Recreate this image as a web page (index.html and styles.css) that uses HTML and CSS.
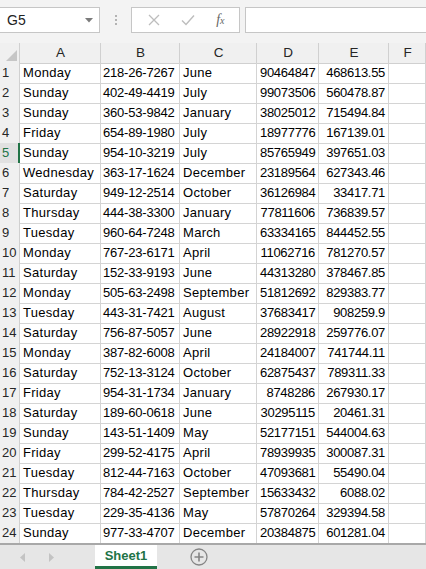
FILE: index.html
```html
<!DOCTYPE html>
<html lang="en">
<head>
  <meta charset="UTF-8">
  <title>Book1 - Excel</title>
  <link rel="stylesheet" href="styles.css">
</head>
<body>
<div id="formula-bar">
  <div class="name-box">
    <span>G5</span>
    <svg class="drop" width="8" height="5" viewBox="0 0 8 5"><polygon points="0,0 8,0 4,4.5" fill="#7b7b7b"/></svg>
  </div>
  <div class="grip"><i></i><i></i><i></i></div>
  <div class="fn-box">
    <svg width="12" height="12" viewBox="0 0 12 12"><path d="M1 1 L11 11 M11 1 L1 11" stroke="#bdbdbd" stroke-width="1.3" fill="none"/></svg>
    <svg width="14" height="12" viewBox="0 0 14 12"><path d="M1 6.5 L5 10.5 L13 1.5" stroke="#bdbdbd" stroke-width="1.4" fill="none"/></svg>
    <span class="fx">f<sub>x</sub></span>
  </div>
  <div class="formula-input"></div>
</div>

<div id="sheet">
  <div class="row head">
    <div class="corner"><svg width="11" height="11" viewBox="0 0 11 11"><polygon points="11,0 11,11 0,11" fill="#c6c6c6"/></svg></div>
    <div class="cell">A</div>
    <div class="cell">B</div>
    <div class="cell">C</div>
    <div class="cell">D</div>
    <div class="cell">E</div>
    <div class="cell">F</div>
  </div>
  <div id="rows"></div>
</div>

<div id="tab-bar">
  <div class="nav">
    <svg width="6" height="9" viewBox="0 0 6 9"><polygon points="5,0 5,9 0,4.5" fill="#c3c3c3"/></svg>
    <svg width="6" height="9" viewBox="0 0 6 9"><polygon points="1,0 1,9 6,4.5" fill="#c3c3c3"/></svg>
  </div>
  <div class="tab">Sheet1</div>
  <div class="add">
    <svg width="18" height="18" viewBox="0 0 18 18"><circle cx="9" cy="9" r="8" stroke="#858585" stroke-width="1.3" fill="none"/><path d="M9 4.5 V13.5 M4.5 9 H13.5" stroke="#858585" stroke-width="1.6"/></svg>
  </div>
</div>

<script>
var data = [
  ['Monday', '218-26-7267', 'June', '90464847', '468613.55'],
  ['Sunday', '402-49-4419', 'July', '99073506', '560478.87'],
  ['Sunday', '360-53-9842', 'January', '38025012', '715494.84'],
  ['Friday', '654-89-1980', 'July', '18977776', '167139.01'],
  ['Sunday', '954-10-3219', 'July', '85765949', '397651.03'],
  ['Wednesday', '363-17-1624', 'December', '23189564', '627343.46'],
  ['Saturday', '949-12-2514', 'October', '36126984', '33417.71'],
  ['Thursday', '444-38-3300', 'January', '77811606', '736839.57'],
  ['Tuesday', '960-64-7248', 'March', '63334165', '844452.55'],
  ['Monday', '767-23-6171', 'April', '11062716', '781270.57'],
  ['Saturday', '152-33-9193', 'June', '44313280', '378467.85'],
  ['Monday', '505-63-2498', 'September', '51812692', '829383.77'],
  ['Tuesday', '443-31-7421', 'August', '37683417', '908259.9'],
  ['Saturday', '756-87-5057', 'June', '28922918', '259776.07'],
  ['Monday', '387-82-6008', 'April', '24184007', '741744.11'],
  ['Saturday', '752-13-3124', 'October', '62875437', '789311.33'],
  ['Friday', '954-31-1734', 'January', '8748286', '267930.17'],
  ['Saturday', '189-60-0618', 'June', '30295115', '20461.31'],
  ['Sunday', '143-51-1409', 'May', '52177151', '544004.63'],
  ['Friday', '299-52-4175', 'April', '78939935', '300087.31'],
  ['Tuesday', '812-44-7163', 'October', '47093681', '55490.04'],
  ['Thursday', '784-42-2527', 'September', '15633432', '6088.02'],
  ['Tuesday', '229-35-4136', 'May', '57870264', '329394.58'],
  ['Sunday', '977-33-4707', 'December', '20384875', '601281.04']
];
var html = '';
data.forEach(function (r, i) {
  html += '<div class="row' + (i === 4 ? ' active' : '') + '">';
  html += '<div class="num">' + (i + 1) + '</div>';
  html += '<div class="cell word">' + r[0] + '</div>';
  html += '<div class="cell phone">' + r[1] + '</div>';
  html += '<div class="cell word">' + r[2] + '</div>';
  html += '<div class="cell value">' + r[3] + '</div>';
  html += '<div class="cell value">' + r[4] + '</div>';
  html += '<div class="cell"></div>';
  html += '</div>';
});
document.getElementById('rows').innerHTML = html;
</script>
</body>
</html>
```

FILE: styles.css
```css
body {
  margin: 0;
  width: 426px;
  height: 569px;
  overflow: hidden;
  background: #fff;
  font-family: 'Liberation Sans', Arial, sans-serif;
  color: #000;
}
#formula-bar {
  height: 43px;
  background: #f3f3f3;
  display: flex;
  align-items: flex-start;
  padding-top: 7px;
  box-sizing: border-box;
}
.name-box {
  width: 101px;
  height: 26px;
  margin-left: -1px;
  background: #fff;
  border: 1px solid #c6c6c6;
  box-sizing: border-box;
  display: flex;
  align-items: center;
  justify-content: space-between;
  padding: 0 6px 0 7px;
  font-size: 14px;
  color: #222;
}
.name-box .drop {
  margin-top: 1px;
}
.grip {
  width: 31px;
  height: 26px;
  display: flex;
  flex-direction: column;
  align-items: center;
  justify-content: center;
  gap: 2px;
}
.grip i {
  width: 2px;
  height: 2px;
  background: #b3b3b3;
}
.fn-box {
  width: 109px;
  height: 26px;
  background: #fff;
  border: 1px solid #c6c6c6;
  box-sizing: border-box;
  display: flex;
  align-items: center;
  justify-content: space-around;
  padding: 0 4px 0 6px;
}
.fx {
  font-family: 'Liberation Serif', serif;
  font-style: italic;
  font-size: 14px;
  color: #666;
  line-height: 1;
}
.fx sub {
  font-size: 10px;
  vertical-align: 0;
}
.formula-input {
  flex: 1;
  height: 26px;
  margin-left: 5px;
  margin-right: -2px;
  background: #fff;
  border: 1px solid #c6c6c6;
  box-sizing: border-box;
}
#sheet {
  height: 500px;
  overflow: hidden;
}
.row {
  display: grid;
  grid-template-columns: 20px 81px 79px 77px 62px 70px 1fr;
  height: 20px;
  font-size: 13px;
}
.row > div {
  border-right: 1px solid #d4d4d4;
  border-bottom: 1px solid #d4d4d4;
  box-sizing: border-box;
  line-height: 20px;
  padding: 0 2px 0 3px;
  white-space: nowrap;
  overflow: visible;
}
.row .word {
  letter-spacing: 0.3px;
}
.row .phone {
  padding-left: 2px;
  letter-spacing: -0.2px;
}
.row .value {
  text-align: right;
  letter-spacing: -0.3px;
  padding-right: 3px;
}
.head > div {
  background: #f0f0f0;
  border-color: #d0d0d0;
  text-align: center;
  color: #262626;
  font-size: 13.5px;
}
.head .corner {
  display: flex;
  align-items: flex-end;
  justify-content: flex-end;
  padding: 0 2px 2px 0;
}
.row .num {
  background: #f0f0f0;
  border-color: #d0d0d0;
  padding: 0 0 0 2px;
  color: #262626;
}
.row.active .num {
  background: #e1e1e1;
  color: #217346;
  border-right: 2px solid #217346;
}
#tab-bar {
  height: 26px;
  background: #e6e6e6;
  border-top: 2px solid #a8a8a8;
  box-sizing: border-box;
  display: flex;
  align-items: stretch;
}
.nav {
  width: 95px;
  display: flex;
  align-items: center;
  gap: 22px;
  padding-left: 20px;
  box-sizing: border-box;
}
.tab {
  width: 62px;
  background: #fff;
  border-bottom: 3px solid #217346;
  box-sizing: border-box;
  color: #217346;
  font-weight: bold;
  font-size: 13px;
  text-align: center;
  line-height: 22px;
}
.add {
  display: flex;
  align-items: center;
  padding-left: 33px;
}
```
